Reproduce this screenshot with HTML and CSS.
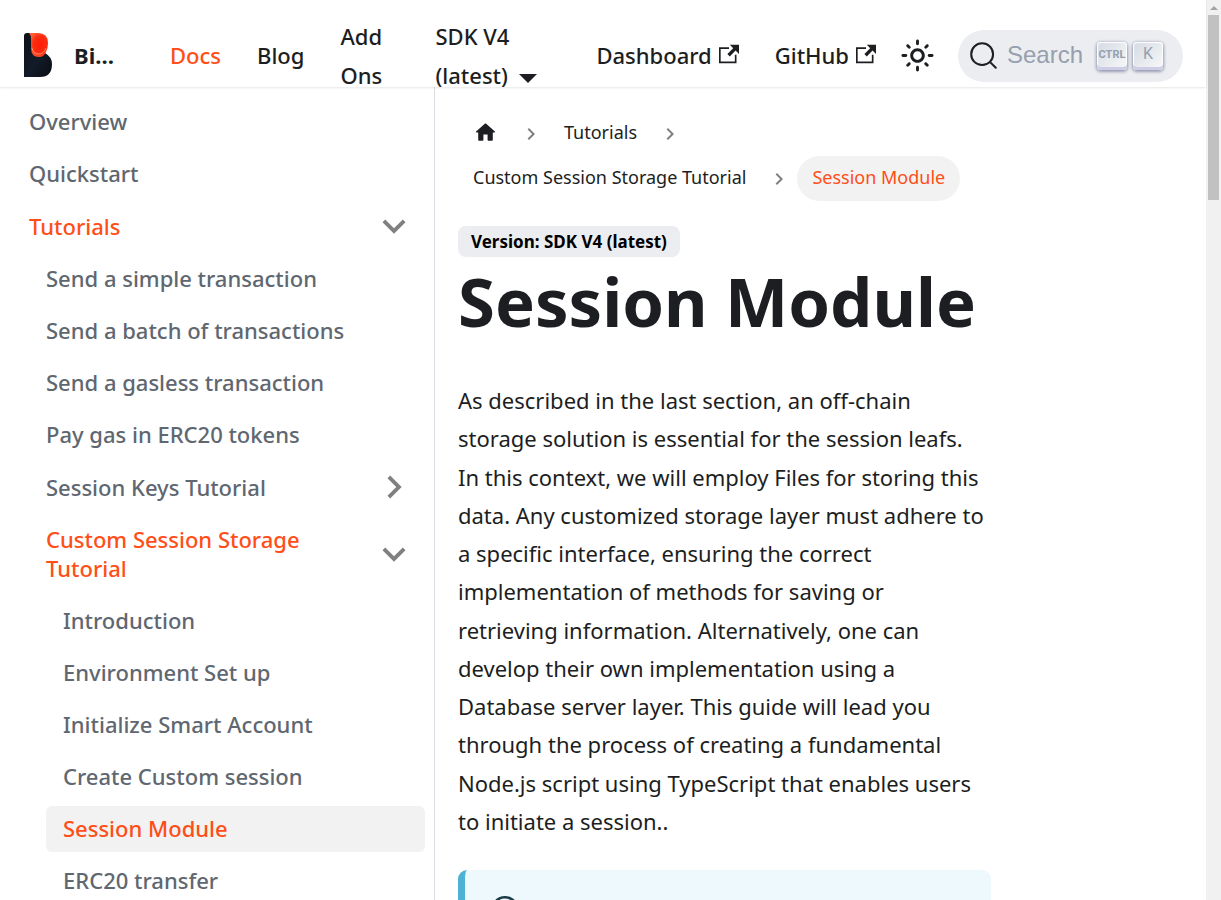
FILE: index.html
```html
<!DOCTYPE html>
<html lang="en">
<head>
<meta charset="utf-8">
<meta name="viewport" content="width=device-width, initial-scale=1">
<title>Session Module | Biconomy</title>
<link rel="stylesheet" href="styles.css">
</head>
<body>
<svg class="defs" aria-hidden="true">
  <symbol id="external" viewBox="0 0 24 24"><path fill="currentColor" d="M21 13v10h-21v-19h12v2h-10v15h17v-8h2zm3-12h-10.988l4.035 4-6.977 7.07 2.828 2.828 6.977-7.07 4.125 4.172v-11z"/></symbol>
  <symbol id="chevron" viewBox="0 0 24 24"><path fill="currentColor" d="M7.41 15.41L12 10.83l4.59 4.58L18 14l-6-6-6 6z"/></symbol>
</svg>
<div class="window">
  <div class="page">
    <header class="navbar">
      <a class="brand" href="#">
        <svg class="logo" viewBox="0 0 30 45" aria-hidden="true">
          <defs>
            <linearGradient id="body" x1="0" y1="0" x2="1" y2="1"><stop offset="0" stop-color="#0d1017"/><stop offset=".55" stop-color="#131b29"/><stop offset="1" stop-color="#0a0c12"/></linearGradient>
            <radialGradient id="flame" cx=".6" cy=".5" r=".6"><stop offset="0" stop-color="#ff1d08"/><stop offset=".6" stop-color="#fb2b10"/><stop offset="1" stop-color="#ff6238"/></radialGradient>
          </defs>
          <path fill="url(#body)" d="M1 3Q1 0 4 0h5l13 20q7 4 7 11 0 13-12 13H1z"/>
          <path fill="url(#flame)" d="M6 0h9q10 0 10 10 0 5-2 9-2 5-7 5-8 0-8-9V6Q8 2 6 0z"/>
          <path fill="none" stroke="#ff8a62" d="M9 15q1 6 7 6 5 0 7-6"/>
        </svg>
        <b class="brand-name">Bi…</b>
      </a>
      <nav class="links" aria-label="Main">
        <a class="nav-link current" href="#">Docs</a>
        <a class="nav-link" href="#">Blog</a>
        <a class="nav-link addons" href="#">Add Ons</a>
        <a class="nav-link version" href="#">SDK V4 (latest)<span class="caret"></span></a>
      </nav>
      <nav class="links tools" aria-label="External">
        <a class="nav-link" href="#">Dashboard<svg class="ext"><use href="#external"/></svg></a>
        <a class="nav-link" href="#">GitHub<svg class="ext"><use href="#external"/></svg></a>
      </nav>
      <button class="theme" type="button" aria-label="Switch theme">
        <svg class="sun" viewBox="0 0 24 24"><path fill="currentColor" d="M12,9c1.65,0,3,1.35,3,3s-1.35,3-3,3s-3-1.35-3-3S10.35,9,12,9 M12,7c-2.76,0-5,2.24-5,5s2.24,5,5,5s5-2.24,5-5 S14.76,7,12,7L12,7z M2,13l2,0c0.55,0,1-0.45,1-1s-0.45-1-1-1l-2,0c-0.55,0-1,0.45-1,1S1.45,13,2,13z M20,13l2,0c0.55,0,1-0.45,1-1 s-0.45-1-1-1l-2,0c-0.55,0-1,0.45-1,1S19.45,13,20,13z M11,2v2c0,0.55,0.45,1,1,1s1-0.45,1-1V2c0-0.55-0.45-1-1-1S11,1.45,11,2z M11,20v2c0,0.55,0.45,1,1,1s1-0.45,1-1v-2c0-0.55-0.45-1-1-1C11.45,19,11,19.45,11,20z M5.99,4.58c-0.39-0.39-1.03-0.39-1.41,0 c-0.39,0.39-0.39,1.03,0,1.41l1.06,1.06c0.39,0.39,1.03,0.39,1.41,0s0.39-1.03,0-1.41L5.99,4.58z M18.36,16.95 c-0.39-0.39-1.03-0.39-1.41,0c-0.39,0.39-0.39,1.03,0,1.41l1.06,1.06c0.39,0.39,1.03,0.39,1.41,0c0.39-0.39,0.39-1.03,0-1.41 L18.36,16.95z M19.42,5.99c0.39-0.39,0.39-1.03,0-1.41c-0.39-0.39-1.03-0.39-1.41,0l-1.06,1.06c-0.39,0.39-0.39,1.03,0,1.41 s1.03,0.39,1.41,0L19.42,5.99z M7.05,18.36c0.39-0.39,0.39-1.03,0-1.41c-0.39-0.39-1.03-0.39-1.41,0l-1.06,1.06 c-0.39,0.39-0.39,1.03,0,1.41s1.03,0.39,1.41,0L7.05,18.36z"/></svg>
      </button>
      <button class="search" type="button">
        <svg class="glass" viewBox="0 0 20 20" aria-hidden="true"><path d="M14.386 14.386l4.0877 4.0877-4.0877-4.0877c-2.9418 2.9419-7.7115 2.9419-10.6533 0-2.9419-2.9418-2.9419-7.7115 0-10.6533 2.9418-2.9419 7.7115-2.9419 10.6533 0 2.9419 2.9418 2.9419 7.7115 0 10.6533z" fill="none" stroke="currentColor" stroke-width="1.4" stroke-linecap="round" stroke-linejoin="round"/></svg>
        <span class="search-text">Search</span>
        <kbd class="key ctrl">CTRL</kbd><kbd class="key">K</kbd>
      </button>
    </header>
    <div class="columns">
      <aside class="sidebar">
        <ul class="menu">
          <li><a class="item" href="#">Overview</a></li>
          <li><a class="item" href="#">Quickstart</a></li>
          <li><a class="item active" href="#">Tutorials<svg class="arrow down"><use href="#chevron"/></svg></a>
            <ul class="menu sub">
              <li><a class="item" href="#">Send a simple transaction</a></li>
              <li><a class="item" href="#">Send a batch of transactions</a></li>
              <li><a class="item" href="#">Send a gasless transaction</a></li>
              <li><a class="item" href="#">Pay gas in ERC20 tokens</a></li>
              <li><a class="item" href="#">Session Keys Tutorial<svg class="arrow"><use href="#chevron"/></svg></a></li>
              <li><a class="item active" href="#">Custom Session Storage Tutorial<svg class="arrow down"><use href="#chevron"/></svg></a>
                <ul class="menu sub">
                  <li><a class="item" href="#">Introduction</a></li>
                  <li><a class="item" href="#">Environment Set up</a></li>
                  <li><a class="item" href="#">Initialize Smart Account</a></li>
                  <li><a class="item" href="#">Create Custom session</a></li>
                  <li><a class="item active here" href="#" aria-current="page">Session Module</a></li>
                  <li><a class="item" href="#">ERC20 transfer</a></li>
                </ul>
              </li>
            </ul>
          </li>
        </ul>
      </aside>
      <main class="main">
        <article class="doc">
          <nav aria-label="Breadcrumbs">
            <ul class="crumbs">
              <li class="crumb"><a class="crumb-link" href="#" aria-label="Home"><svg class="home" viewBox="0 0 24 24"><path fill="currentColor" d="M10 19v-5h4v5c0 .55.45 1 1 1h3c.55 0 1-.45 1-1v-7h1.7c.46 0 .68-.57.33-.87L12.67 3.6c-.38-.34-.96-.34-1.34 0l-8.36 7.53c-.34.3-.13.87.33.87H5v7c0 .55.45 1 1 1h3c.55 0 1-.45 1-1z"/></svg></a><svg class="sep"><use href="#chevron"/></svg></li>
              <li class="crumb"><a class="crumb-link" href="#">Tutorials</a><svg class="sep"><use href="#chevron"/></svg></li>
              <li class="crumb"><a class="crumb-link" href="#">Custom Session Storage Tutorial</a><svg class="sep"><use href="#chevron"/></svg></li>
              <li class="crumb"><span class="crumb-link pill">Session Module</span></li>
            </ul>
          </nav>
          <span class="badge">Version: SDK V4 (latest)</span>
          <h1 class="title">Session Module</h1>
          <p class="text">As described in the last section, an off-chain storage solution is essential for the session leafs. In this context, we will employ Files for storing this data. Any customized storage layer must adhere to a specific interface, ensuring the correct implementation of methods for saving or retrieving information. Alternatively, one can develop their own implementation using a Database server layer. This guide will lead you through the process of creating a fundamental Node.js script using TypeScript that enables users to initiate a session..</p>
          <div class="note">
            <svg class="info" viewBox="0 0 14 16" aria-hidden="true"><path fill="currentColor" fill-rule="evenodd" d="M6.3 5.69a.942.942 0 0 1-.28-.7c0-.28.09-.52.28-.7.19-.18.42-.28.7-.28.28 0 .52.09.7.28.18.19.28.42.28.7 0 .28-.09.52-.28.7a1 1 0 0 1-.7.3c-.28 0-.52-.11-.7-.3zM8 7.99c-.02-.25-.11-.48-.31-.69-.2-.19-.42-.3-.69-.31H6c-.27.02-.48.13-.69.31-.2.2-.3.44-.31.69h1v3c.02.27.11.5.31.69.2.2.42.31.69.31h1c.27 0 .48-.11.69-.31.2-.19.3-.42.31-.69H8V7.98v.01zM7 2.3c-3.14 0-5.7 2.54-5.7 5.68 0 3.14 2.56 5.7 5.7 5.7s5.7-2.55 5.7-5.7c0-3.15-2.56-5.69-5.7-5.69v.01zM7 .98c3.86 0 7 3.14 7 7s-3.14 7-7 7-7-3.12-7-7 3.14-7 7-7z"/></svg>
          </div>
        </article>
      </main>
    </div>
  </div>
  <div class="scrollbar" aria-hidden="true"><span class="scroll-up"></span><span class="thumb"></span></div>
</div>
</body>
</html>
```
FILE: styles.css
```css
* { box-sizing: border-box; }
body {
  margin: 0;
  font-family: "Noto Sans", "Open Sans", sans-serif;
  font-size: 22px;
  color: #1c1e21;
  background: #fff;
}
a { color: inherit; text-decoration: none; }
ul { list-style: none; margin: 0; padding: 0; }
button { border: 0; font: inherit; color: inherit; cursor: pointer; }
.defs { display: none; }

.window { display: flex; height: 100vh; overflow: hidden; }
.page { flex: 1; min-width: 0; display: flex; flex-direction: column; }

.navbar {
  position: relative;
  z-index: 1;
  display: flex;
  align-items: center;
  flex: none;
  height: 87px;
  padding: 24px 23px 0 23px;
  box-shadow: 0 1px 2px rgba(0, 0, 0, .1);
  font-weight: 500;
  line-height: 39px;
}
.brand { display: flex; align-items: center; gap: 21px; margin-right: 32px; }
.logo { width: 30px; height: 45px; }
.brand-name { font-weight: 700; width: 46px; }
.links { display: flex; align-items: center; }
.nav-link { padding: 0 18px; white-space: nowrap; }
.current { color: #ff4e17; }
.addons { white-space: normal; width: 95px; }
.version { white-space: normal; width: 141px; }
.caret {
  display: inline-block;
  margin-left: 11px;
  border: 9px solid transparent;
  border-top-color: currentColor;
  border-bottom: 0;
  vertical-align: 1px;
}
.tools { margin-left: auto; }
.ext { width: 20px; height: 20px; margin-left: 7px; }
.theme {
  display: flex;
  align-items: center;
  justify-content: center;
  width: 47px;
  height: 47px;
  padding: 0;
  background: none;
}
.sun { width: 35px; height: 35px; }
.search {
  display: flex;
  align-items: center;
  width: 225px;
  height: 52px;
  margin-left: 17px;
  padding: 0 20px 0 11px;
  border-radius: 26px;
  background: #ebedf0;
}
.glass { width: 29px; height: 29px; flex: none; }
.search-text {
  flex: 1;
  padding-left: 9px;
  text-align: left;
  font-family: "Liberation Sans", Arial, sans-serif;
  font-size: 24px;
  font-weight: 400;
  line-height: 36px;
  padding-bottom: 2px;
  color: #969faf;
}
.key {
  flex: none;
  width: 30px;
  height: 28px;
  margin-left: 6px;
  border-radius: 4px;
  background: linear-gradient(-225deg, #d5dbe4, #f8f8f8);
  box-shadow: inset 0 -3px 0 0 #cdcde6, inset 0 0 1px 1px #fff, 0 1px 3px 1px rgba(30, 35, 90, .4);
  font-family: Roboto, sans-serif;
  font-size: 16px;
  font-weight: 400;
  line-height: 24px;
  color: #969faf;
  text-align: center;
}
.ctrl { font-family: "Liberation Sans Narrow", Roboto, sans-serif; font-size: 11px; font-weight: 700; line-height: 26px; }

.columns { display: flex; flex: 1; min-height: 0; }
.sidebar {
  flex: none;
  width: 435px;
  padding: 12px 9px 0 12px;
  border-right: 1px solid #dadde1;
  overflow: hidden;
}
.menu { display: flex; flex-direction: column; gap: 6px; }
.sub { margin-top: 6px; padding-left: 17px; }
.item {
  display: flex;
  align-items: center;
  justify-content: space-between;
  padding: 8px 17px 9px;
  border-radius: 6px;
  font-weight: 500;
  line-height: 29px;
  color: #606770;
}
.active { color: #ff4e17; }
.here { background: #f2f2f2; }
.arrow { flex: none; width: 46px; height: 46px; margin: -8px -9px; color: #808080; transform: rotate(90deg); }
.down { transform: rotate(180deg); }

.main { flex: 1; min-width: 0; padding: 24px 0 0; overflow: hidden; }
.doc { width: 75%; padding: 0 22px 0 23px; }
.crumbs { display: flex; flex-wrap: wrap; }
.crumb { display: flex; align-items: center; font-size: 18px; line-height: 42px; }
.crumb-link { display: flex; align-items: center; height: 45px; padding: 0 15px 3px; }
.home { width: 25px; height: 25px; }
.sep { width: 24px; height: 24px; margin: 0 6px; color: #808080; transform: rotate(90deg); }
.pill { border-radius: 23px; background: #f2f2f2; color: #ff4e17; }
.badge {
  display: inline-block;
  margin-top: 25px;
  padding: 0 13px;
  border-radius: 8px;
  background: #ebedf0;
  color: #000;
  font-size: 17px;
  font-weight: 700;
  line-height: 31px;
}
.title { margin: 0 0 36px; font-size: 67px; font-weight: 700; line-height: 88px; }
.text { margin: 0 0 30px; padding-right: 5px; line-height: 1.74; }
.note {
  padding: 24px 26px;
  border-left: 7px solid #4cb3d4;
  border-radius: 9px;
  background: #eef9fd;
  color: #193c47;
}
.info { display: block; width: 28px; height: 32px; }

.scrollbar {
  display: flex;
  flex-direction: column;
  align-items: center;
  flex: none;
  width: 15px;
  background: #f1f1f1;
}
.scroll-up { margin: 6px 0 5px; border: 4px solid transparent; border-bottom-color: #a3a3a3; border-top: 0; }
.thumb { width: 11px; height: 185px; background: #c1c1c1; }
```
